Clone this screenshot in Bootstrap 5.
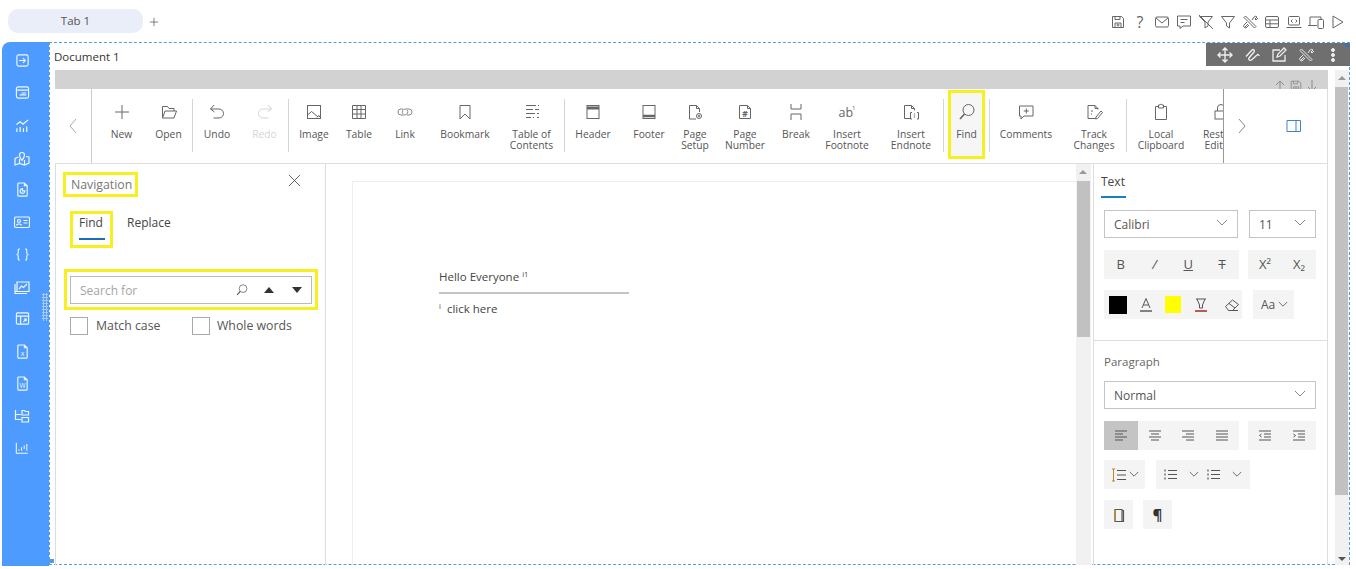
<!DOCTYPE html>
<html lang="en">
<head>
<meta charset="UTF-8">
<title>Document 1</title>
<link rel="stylesheet" href="https://cdn.jsdelivr.net/npm/bootstrap@5.3.0/dist/css/bootstrap.min.css">
<style>
    html, body { height: 569px; overflow: hidden; }
    body { background: #fff; color: #444; font-family: "Open Sans", "Liberation Sans", sans-serif; font-size: 12px; }
    svg { display: block; fill: none; stroke: currentColor; stroke-width: 1; flex: none; }
    svg text { fill: currentColor; stroke: none; font-family: "Open Sans", sans-serif; }

    .tab-strip { height: 42px; padding: 9px 7px 0 8px; }
    .tab-pill { width: 135px; height: 24px; background: #e9eef8; border-radius: 10px; color: #555; line-height: 24px; text-align: center; font-size: 11.5px; }
    .tab-add { width: 20px; color: #333; padding-top: 7px; padding-left: 5px; }
    .top-set { padding-top: 5px; }
    .top-icon { width: 22px; display: flex; justify-content: center; color: #666; }

    .work-row { height: 524px; padding-left: 2px; }
    .side-rail { width: 47px; background: #4d9bff; border-top-left-radius: 8px; padding-top: 11px; color: #f2f7ff; flex: none; }
    .side-rail svg { stroke-width: 1.2; }
    .rail-item { height: 32.3px; display: flex; justify-content: center; align-items: flex-start; padding-right: 7px; }
    .frame-box { width: 1301px; height: 523px; border: 1px dashed #5a9be0; padding-left: 5px; position: relative; }
    .frame-head { height: 27px; line-height: 28px; color: #333; font-size: 11.5px; margin-left: -1px; }
    .grip-dots { position: absolute; left: -8px; top: 250px; width: 6px; height: 28px; background-image: radial-gradient(#a9c9f2 1px, transparent 1.1px); background-size: 3px 3px; }
    .corner-a { position: absolute; right: 0; top: 0; width: 4px; height: 4px; background: #3c6fb0; }
    .corner-b { position: absolute; left: -1px; bottom: 1px; width: 5px; height: 4px; background: #5a9be0; }

    .float-tools { position: absolute; right: -1px; top: 0; width: 144px; height: 23px; background: #6f6f6f; color: #eee; padding-left: 5px; }
    .float-tools span { width: 27px; display: flex; justify-content: center; }

    .doc-col { width: 1273px; height: 495px; }
    .grey-strip { height: 19px; background: #d2d2d2; color: #8a8a8a; overflow: hidden; padding: 9px 8px 0 0; gap: 1px; flex: none; }
    .grey-strip span { width: 15px; display: block; }

    .ribbon { height: 75px; border-bottom: 1px solid #ddd; border-right: 1px solid #ddd; position: relative; overflow: hidden; flex: none; }
    .rib-back { width: 37px; border-right: 1px solid #ccc; color: #aaa; flex: none; }
    .rib-list { padding-left: 6px; flex: none; }
    .rib-item { flex: none; padding-top: 13px; text-align: center; font-size: 10.3px; line-height: 11px; color: #555; }
    .rib-item svg { margin: 0 auto 7px; color: #666; }
    .rib-off, .rib-item.rib-off svg { color: #d5d5d5; }
    .rib-sep { width: 1px; height: 53px; margin-top: 10px; background: #d5d5d5; flex: none; }
    .wd-36 { width: 36px; } .wd-38 { width: 38px; } .wd-40 { width: 40px; } .wd-47 { width: 47px; }
    .wd-48 { width: 48px; } .wd-50 { width: 50px; } .wd-52 { width: 52px; } .wd-56 { width: 56px; }
    .wd-64 { width: 64px; } .wd-65 { width: 65px; } .wd-68 { width: 68px; } .wd-72 { width: 72px; }
    .rib-find { width: 37px; height: 69px; margin: 1px 4px 0 4px; border: 3px solid #f7f01e; background: #f6f6f6; padding-top: 9px; }
    .rib-find svg { margin-bottom: 7px; }
    .rib-end { position: absolute; right: 0; top: 0; bottom: 0; width: 104px; background: #fff; border-left: 1px solid #999; color: #888; }
    .rib-end .toggle-ic { color: #3f83c9; margin-left: 38px; }
    .rib-end .next-ic { margin-left: 12px; }

    .lower-row { min-height: 0; overflow: hidden; }
    .nav-pane { width: 271px; border-left: 1px solid #ddd; border-right: 1px solid #ddd; padding: 8px 0 0 7px; flex: none; position: relative; }
    .mark-box { border: 3px solid #f7f01e; }
    .nav-title { width: 75px; height: 25px; line-height: 20px; padding-left: 5px; color: #777; font-size: 12.3px; }
    .nav-close { position: absolute; left: 232px; top: 10px; color: #555; }
    .nav-tabs-row { margin: 14px 0 0 7px; height: 37px; }
    .find-tab { width: 43px; height: 37px; padding: 0 0 0 6px; color: #444; position: relative; }
    .find-tab i { display: block; position: absolute; left: 6px; top: 24px; width: 26px; height: 2px; background: #1a6fbb; }
    .nav-tabs-row .nav-link { padding: 3px 0 0; color: #444; margin-left: 14px; font-size: 12px; }
    .search-wrap { width: 254px; height: 41px; margin: 21px 0 0 1px; padding: 4px 3px; }
    .search-inner { height: 28px; border: 1px solid #bbb; padding-left: 9px; color: #555; }
    .search-inner .form-control { border: 0; padding: 1px 0 0; font-size: 12px; height: 26px; box-shadow: none; width: 148px; background: transparent; font-family: inherit; flex: none; }
    .search-inner .form-control::placeholder { color: #a5a5a5; }
    .search-up { margin: 0 16px 0 14px; }
    .opt-row { margin: 7px 0 0 7px; font-size: 12.3px; color: #555; }
    .opt-row label { line-height: 20px; height: 18px; }
    .opt-row .form-check-input { width: 18px; height: 18px; margin: 0; border-radius: 0; border-color: #aaa; flex: none; }
    .opt-one { width: 122px; gap: 8px; }
    .opt-two { gap: 7px; }

    .page-area { width: 750px; padding: 17px 0 0 26px; overflow: hidden; flex: none; }
    .page-sheet { height: 500px; border: 1px solid #eee; border-right: 0; padding: 86px 0 0 86px; font-size: 11.5px; line-height: 18px; color: #444; }
    .page-sheet sup { font-size: 7.5px; top: -4px; position: relative; vertical-align: baseline; }
    .page-rule { width: 190px; height: 2px; background: #c4c4c4; margin: 6px 0 6px; }
    .scroll-y { background: #f1f1f1; color: #777; position: relative; flex: none; }
    .scroll-in { width: 15px; margin-right: 2px; }
    .scroll-out { width: 14px; height: 495px; margin-left: 7px; }
    .scroll-thumb { position: absolute; left: 1px; right: 1px; background: #c1c1c1; }
    .scroll-in .scroll-thumb { top: 17px; height: 156px; }
    .scroll-out .scroll-thumb { top: 17px; height: 408px; left: 0; }
    .arrow-up, .arrow-dn { position: absolute; left: 3px; width: 0; height: 0; border-left: 4px solid transparent; border-right: 4px solid transparent; }
    .arrow-up { top: 6px; border-bottom: 4px solid #999; }
    .arrow-dn { bottom: 4px; border-top: 4px solid #555; }

    .prop-pane { width: 235px; border-left: 1px solid #ddd; border-right: 1px solid #ddd; flex: none; }
    .prop-text { height: 177px; border-bottom: 1px solid #ddd; padding: 11px 11px 0 10px; }
    .prop-para { padding: 14px 11px 0 10px; }
    .prop-tab { width: 25px; height: 23px; border-bottom: 2px solid #1a7fc1; margin-left: -3px; color: #444; font-size: 12px; line-height: 14px; }
    .pick-box { height: 28px; border: 1px solid #c4c4c4; padding: 2px 9px 0; color: #555; font-size: 12px; }
    .pick-box svg { color: #888; margin-top: -5px; }
    .pick-font { width: 134px; }
    .pick-size { width: 67px; }
    .gap-12 { margin-top: 12px; }
    .gap-10 { margin-top: 10px; }
    .gap-11 { margin-top: 11px; }
    .btn-band { background: #f4f4f4; height: 29px; color: #555; }
    .prop-btn { height: 29px; padding: 0; border: 0; border-radius: 0; display: flex; align-items: center; justify-content: center; color: #555; font-size: 13px; line-height: 1; flex: none; }
    .b21 { width: 21px; } .b29 { width: 29px; } .b33 { width: 33.5px; } .b34 { width: 34px; } .b38 { width: 38px; } .b40 { width: 40px; }
    .on-btn { background: #c4c4c4; }
    .ink-black { width: 18px; height: 18px; background: #000; display: block; margin-left: 5px; flex: none; }
    .ink-yellow { width: 16px; height: 17px; background: #ff0; display: block; flex: none; }
    .para-label { color: #666; font-size: 11.5px; line-height: 14px; margin: 0 0 12px; font-weight: 400; }
    .band-case { width: 41px; margin-left: 11px; padding-left: 8px; gap: 3px; }
    .band-line { width: 41px; padding-left: 7px; gap: 2px; }
    .band-list { width: 94px; margin-left: 11px; padding-left: 8px; }
    .list-pick { width: 48px; gap: 11px; }
    .band-next { margin-left: 10px; }
    .pilcrow-btn { color: #333; font-size: 15px; }
</style>
</head>
<body>

<!-- icon set -->
<svg width="0" height="0" class="position-absolute">
    <symbol id="i-new" viewBox="0 0 20 20"><path d="M10 3v14M3 10h14"/></symbol>
    <symbol id="i-open" viewBox="0 0 20 20"><path d="M3.500 16V4.500h5l1.500 2h5v2.500M3.500 16h11.500l2.500-7H6z"/></symbol>
    <symbol id="i-undo" viewBox="0 0 20 20"><path d="M7 3 3.500 7 7.500 10M3.500 7H12a4.500 4.500 0 0 1 0 9H6.500"/></symbol>
    <symbol id="i-redo" viewBox="0 0 20 20"><path d="M13 3l3.500 4-4 3M16.500 7H8a4.500 4.500 0 0 0 0 9h5.500"/></symbol>
    <symbol id="i-image" viewBox="0 0 20 20"><rect x="3.500" y="3.500" width="13" height="13" fill="none"/><path d="M3.500 13l4-3.500 6 5 1-1 2 2M13 15.500l2-2"/></symbol>
    <symbol id="i-table" viewBox="0 0 20 20"><path d="M3.500 3.500h13v13h-13zM3.500 7.500h13M3.500 12h13M8 3.500v13M12 3.500v13"/></symbol>
    <symbol id="i-link" viewBox="0 0 20 20"><path d="M8 7H6a3 3 0 0 0 0 6h4a3 3 0 0 0 2-5M12 13h2a3 3 0 0 0 0-6h-4a3 3 0 0 0-2 5" stroke="#888"/></symbol>
    <symbol id="i-mark" viewBox="0 0 20 20"><path d="M5 3.500h10V17l-5-5-5 5z"/></symbol>
    <symbol id="i-toc" viewBox="0 0 20 20"><path d="M4 3.500h10M16 3.500h1M4 7.500h7M13 7.500h4M4 11.500h9M15 11.500h2M4 15.500h5M11 15.500h1M15 15.500h2"/></symbol>
    <symbol id="i-head" viewBox="0 0 20 20"><rect x="4" y="3.500" width="12" height="13" fill="none"/><path d="M4 6h12" stroke-width="3"/></symbol>
    <symbol id="i-foot" viewBox="0 0 20 20"><rect x="4" y="3.500" width="12" height="13" fill="none"/><path d="M4 14h12" stroke-width="2.500"/></symbol>
    <symbol id="i-setup" viewBox="0 0 20 20"><path d="M11 17H4.500V3.500h7l3 3V10M11.500 3.500v3h3"/><circle cx="14" cy="14" r="2.500"/><circle cx="14" cy="14" r=".8"/></symbol>
    <symbol id="i-break" viewBox="0 0 20 20"><path d="M5 2v5h10V2M5 18v-6h10v6"/></symbol>
    <symbol id="i-find" viewBox="0 0 20 20"><circle cx="11.500" cy="8" r="5.500"/><path d="M7.500 12 3 17" stroke-width="1.600"/></symbol>
    <symbol id="i-comm" viewBox="0 0 20 20"><path d="M3.500 4h13.500v10H8l-3 3v-3H3.500zM10.300 6.500v5M7.800 9h5"/></symbol>
    <symbol id="i-track" viewBox="0 0 20 20"><path d="M11 16.500H4V3.500h7l3 3v1M11 3.500v3h3M7 9h2M7 12h1M12 15l5-6 1.500 1.500-5 6-2 .5z"/></symbol>
    <symbol id="i-clip" viewBox="0 0 20 20"><path d="M7 4.500H4.500v13h11v-13H13M7.500 6V3H9c0-1 2-1 2 0h1.500v3z"/></symbol>
    <symbol id="i-lock" viewBox="0 0 20 20"><rect x="4" y="9" width="12" height="8" fill="none"/><path d="M6.500 9V6a3.500 3.500 0 0 1 7 0v3"/></symbol>
    <symbol id="i-left" viewBox="0 0 12 20"><path d="M9 3 3 10l6 7"/></symbol>
    <symbol id="i-right" viewBox="0 0 12 20"><path d="m3 3 6 7-6 7"/></symbol>
    <symbol id="i-panel" viewBox="0 0 16 14"><path d="M1 1.500h13.500v11H1zM10 1.500v11"/></symbol>
    <symbol id="i-close" viewBox="0 0 14 14"><path d="m1 1 12 12M13 1 1 13"/></symbol>
    <symbol id="i-chev" viewBox="0 0 12 8"><path d="m1 1 5 5 5-5"/></symbol>
    <symbol id="i-upto" viewBox="0 0 14 14"><path d="M7 2v11M3 6l4-4 4 4M1 13h12"/></symbol>
    <symbol id="i-dnto" viewBox="0 0 14 14"><path d="M7 1v11M3 8l4 4 4-4M1 13h12"/></symbol>

    <symbol id="t-save" viewBox="0 0 16 16"><path d="M2.500 2.500h9l2 2v9h-11zM5 2.500v3h5v-3M5 13.500V9h6v4.500"/><circle cx="8" cy="11" r="1"/></symbol>
    <symbol id="t-mail" viewBox="0 0 16 16"><rect x="1.500" y="3" width="13" height="10" rx="1.500" fill="none"/><path d="m2 4 6 5 6-5"/></symbol>
    <symbol id="t-chat" viewBox="0 0 16 16"><path d="M1.500 2h13v10H7l-3 2.500V12H1.500zM4.500 5.500h7M4.500 8.500h4"/></symbol>
    <symbol id="t-nofilter" viewBox="0 0 16 16"><path d="M1.500 2.500h13L10 8v4l-3 2V8zM1 1l14 14"/></symbol>
    <symbol id="t-filter" viewBox="0 0 16 16"><path d="M1.500 2.500h13L9.500 9v5l-3-2V9z"/></symbol>
    <symbol id="t-tools" viewBox="0 0 16 16"><path d="m2 3.500 1.500-1.500 10.500 10.500L12.500 14zM10 6l2-3c1-1 2.500-1 3 0l-2 2 1 1 2-2M6 10l-3 3M5 8 2 11c-1 1 0 3 2 3l3-3"/></symbol>
    <symbol id="t-grid" viewBox="0 0 16 16"><rect x="1.500" y="2.500" width="13" height="11" rx="1.500" fill="none"/><path d="M1.500 6h13M1.500 9.800h13M6 6v7.500"/></symbol>
    <symbol id="t-laptop" viewBox="0 0 16 16"><rect x="2.500" y="2.500" width="11" height="8.500" rx="1" fill="none"/><path d="M.5 13.500h15M6.500 5.500 5 7l1.500 1.500M9.500 5.500 11 7 9.500 8.500"/></symbol>
    <symbol id="t-device" viewBox="0 0 16 16"><path d="M9 11.500H0M2 11V3h11v2"/><rect x="10" y="5.500" width="5.500" height="9" rx="1" fill="none"/></symbol>
    <symbol id="t-play" viewBox="0 0 16 16"><path d="M3 2v12l10-6z"/></symbol>

    <symbol id="f-move" viewBox="0 0 16 16"><path d="M8 1v14M1 8h14M5.500 3.500 8 1l2.500 2.500M5.500 12.500 8 15l2.500-2.500M3.500 5.500 1 8l2.500 2.500M12.500 5.500 15 8l-2.500 2.500" stroke-width="1.400"/></symbol>
    <symbol id="f-wave" viewBox="0 0 16 16"><path d="M2 9.500 8 3c1.500-1.500 3 .5 2 2L5 11c-1 1.500 1 3 2.500 2L13 8c1-1 2 0 2 1" stroke-width="1.400"/></symbol>
    <symbol id="f-edit" viewBox="0 0 16 16"><path d="M14 8v6H2V3h7M6 10l1-3 6-6 2 2-6 6z" stroke-width="1.300"/></symbol>
    <symbol id="f-dots" viewBox="0 0 16 16"><circle cx="8" cy="3" r="1.500" fill="currentColor"/><circle cx="8" cy="8" r="1.500" fill="currentColor"/><circle cx="8" cy="13" r="1.500" fill="currentColor"/></symbol>

    <symbol id="r-login" viewBox="0 0 16 16"><rect x="2" y="2" width="12" height="12" rx="2" fill="none"/><path d="M4.500 8H11M8.500 5.500 11 8l-2.500 2.500"/></symbol>
    <symbol id="r-card" viewBox="0 0 16 16"><rect x="1.500" y="2" width="13" height="12" rx="2" fill="none"/><path d="M1.500 5.500h13M7 8.500h5M5 10.500h7"/></symbol>
    <symbol id="r-bars" viewBox="0 0 16 16"><path d="M2 15v-4M5.500 15V9.500M9 15v-4M12.500 15V9M1.500 7l4-3 3 2.500L14 2" stroke-width="1.300"/></symbol>
    <symbol id="r-map" viewBox="0 0 16 16"><path d="M4.500 7 1 8.500V15l4.500-1.500 5 1.500L15 13V7l-3-.5M5.500 9v4.500M10.500 10v5"/><path d="M8 10.500C6.500 8.500 5.500 7 5.500 5a2.500 2.500 0 0 1 5 0c0 2-1 3.500-2.500 5.500z"/></symbol>
    <symbol id="r-doc" viewBox="0 0 16 16"><path d="M3 2a1 1 0 0 1 1-1h6l3 3v10a1 1 0 0 1-1 1H4a1 1 0 0 1-1-1zM10 1v3h3"/><path d="M10.500 9.500a2.500 2.500 0 1 1-2.500-2.500V9.500z"/></symbol>
    <symbol id="r-id" viewBox="0 0 16 16"><rect x=".5" y="3" width="15" height="10.500" rx="1.500" fill="none"/><circle cx="5" cy="7" r="1.500"/><path d="M2.500 11.500c0-2 5-2 5 0M9.500 6.500h4M9.500 9h4"/></symbol>
    <symbol id="r-brace" viewBox="0 0 16 16"><path d="M5 2C3 2 3.500 4 3.500 6S2.500 8 1.500 8c1 0 2 0 2 2S3 14 5 14M11 2c2 0 1.500 2 1.500 4s1 2 2 2c-1 0-2 0-2 2s.5 4-1.500 4"/></symbol>
    <symbol id="r-chart" viewBox="0 0 16 16"><path d="M3 12.500V3h12v9.500H1"/><path d="M1 5v9.500h12M5 10l2.500-3 2 1.500L13 5"/></symbol>
    <symbol id="r-sheet" viewBox="0 0 16 16"><rect x="1.500" y="2" width="13" height="12" rx="1" fill="none"/><path d="M1.500 5.500h13M6 5.500V14M9 11.500l3-3M12 11v-2.500H9.500"/></symbol>
    <symbol id="r-page" viewBox="0 0 16 16"><path d="M3 2a1 1 0 0 1 1-1h6l3 3v10a1 1 0 0 1-1 1H4a1 1 0 0 1-1-1zM10 1v3h3"/></symbol>
    <symbol id="r-tree" viewBox="0 0 16 16"><path d="M1.500 2v9.500H7M1.500 6.500H7M8 2.500h2.500l1 1h3V7H8zM8 9.500h6.500V14H8z"/></symbol>
    <symbol id="r-stat" viewBox="0 0 16 16"><path d="M1.500 2v12h13M4.500 11V9.500M7.500 11V7M10.500 9V5M13.500 11V3.500"/></symbol>

    <symbol id="p-a" viewBox="0 0 14 16"><path d="M3 11 7 1.500 11 11M4.500 8h5"/><path d="M1 14h12" stroke-width="1.600" stroke="#666"/></symbol>
    <symbol id="p-hi" viewBox="0 0 14 16"><path d="M2 2h10M3 2l2.500 6v3h3V8L11 2"/><path d="M1 14h12" stroke-width="1.600" stroke="#a33"/></symbol>
    <symbol id="p-erase" viewBox="0 0 16 14"><path d="m1.500 8.500 7-6.500 6 4.500-6 6H4.500zM5 5.500l6 4.500M4.500 12.500H14"/></symbol>
    <symbol id="p-al" viewBox="0 0 14 12"><path d="M1 1h12M1 4h8M1 7h12M1 10h8" stroke="#555"/></symbol>
    <symbol id="p-ac" viewBox="0 0 14 12"><path d="M1 1h12M3 4h8M1 7h12M3 10h8"/></symbol>
    <symbol id="p-ar" viewBox="0 0 14 12"><path d="M1 1h12M5 4h8M1 7h12M5 10h8"/></symbol>
    <symbol id="p-aj" viewBox="0 0 14 12"><path d="M1 1h12M1 4h12M1 7h12M1 10h12"/></symbol>
    <symbol id="p-out" viewBox="0 0 14 12"><path d="M1 1h12M6 4h7M6 7h7M1 10h12M3.500 4 1.500 5.500l2 1.500"/></symbol>
    <symbol id="p-in" viewBox="0 0 14 12"><path d="M1 1h12M6 4h7M6 7h7M1 10h12M1.500 4l2 1.500-2 1.500"/></symbol>
    <symbol id="p-line" viewBox="0 0 16 14"><path d="M2.500 1v12M1 1h3M1 13h3" stroke="#b8862b"/><path d="M6 2.500h9M6 7h9M6 11.500h9"/></symbol>
    <symbol id="p-list" viewBox="0 0 14 12"><path d="M4 1.500h9M4 5.500h9M4 9.500h9M1 .5v2M1 4.500v2M1 8.500v2" stroke-width="1.200"/></symbol>
    <symbol id="p-pdoc" viewBox="0 0 14 16"><path d="M3 2.500h7v12H3zM10 3.500h1.500v11H10" stroke-width="1.200"/><path d="M3 2.500v12" stroke="#b8862b" stroke-width="1.200"/></symbol>
</svg>

<!-- tab bar -->
<div class="tab-strip d-flex">
    <div class="tab-pill">Tab 1</div>
    <div class="tab-add"><svg width="12" height="12"><use href="#i-new"/></svg></div>
    <div class="d-flex ms-auto top-set">
        <span class="top-icon"><svg width="16" height="16"><use href="#t-save"/></svg></span>
        <span class="top-icon fs-6 lh-1">?</span>
        <span class="top-icon"><svg width="16" height="16"><use href="#t-mail"/></svg></span>
        <span class="top-icon"><svg width="16" height="16"><use href="#t-chat"/></svg></span>
        <span class="top-icon"><svg width="16" height="16"><use href="#t-nofilter"/></svg></span>
        <span class="top-icon"><svg width="16" height="16"><use href="#t-filter"/></svg></span>
        <span class="top-icon"><svg width="16" height="16"><use href="#t-tools"/></svg></span>
        <span class="top-icon"><svg width="16" height="16"><use href="#t-grid"/></svg></span>
        <span class="top-icon"><svg width="16" height="16"><use href="#t-laptop"/></svg></span>
        <span class="top-icon"><svg width="16" height="16"><use href="#t-device"/></svg></span>
        <span class="top-icon"><svg width="16" height="16"><use href="#t-play"/></svg></span>
    </div>
</div>

<div class="work-row d-flex">
    <!-- left rail -->
    <div class="side-rail">
        <div class="rail-item"><svg width="15" height="15"><use href="#r-login"/></svg></div>
        <div class="rail-item"><svg width="15" height="15"><use href="#r-card"/></svg></div>
        <div class="rail-item"><svg width="15" height="15"><use href="#r-bars"/></svg></div>
        <div class="rail-item"><svg width="16" height="16"><use href="#r-map"/></svg></div>
        <div class="rail-item"><svg width="15" height="15"><use href="#r-doc"/></svg></div>
        <div class="rail-item"><svg width="16" height="16"><use href="#r-id"/></svg></div>
        <div class="rail-item"><svg width="15" height="15"><use href="#r-brace"/></svg></div>
        <div class="rail-item"><svg width="16" height="16"><use href="#r-chart"/></svg></div>
        <div class="rail-item"><svg width="15" height="15"><use href="#r-sheet"/></svg></div>
        <div class="rail-item"><svg width="15" height="15" viewBox="0 0 16 16"><use href="#r-page"/><text x="8" y="12.500" font-size="7.500" text-anchor="middle">x</text></svg></div>
        <div class="rail-item"><svg width="15" height="15" viewBox="0 0 16 16"><use href="#r-page"/><text x="8" y="12.500" font-size="7" text-anchor="middle">W</text></svg></div>
        <div class="rail-item"><svg width="16" height="16"><use href="#r-tree"/></svg></div>
        <div class="rail-item"><svg width="14" height="14"><use href="#r-stat"/></svg></div>
    </div>

    <div class="frame-box">
        <div class="grip-dots"></div>
        <div class="frame-head">Document 1</div>
        <div class="float-tools d-flex align-items-center">
            <span><svg width="16" height="16"><use href="#f-move"/></svg></span>
            <span><svg width="16" height="16"><use href="#f-wave"/></svg></span>
            <span><svg width="16" height="16"><use href="#f-edit"/></svg></span>
            <span><svg width="16" height="16"><use href="#t-tools"/></svg></span>
            <span><svg width="16" height="16"><use href="#f-dots"/></svg></span>
        </div>
        <div class="corner-a"></div>
        <div class="corner-b"></div>

        <div class="d-flex">
            <div class="doc-col d-flex flex-column">
                <div class="grey-strip d-flex justify-content-end">
                    <span><svg width="14" height="14"><use href="#i-upto"/></svg></span>
                    <span><svg width="14" height="14"><use href="#t-save"/></svg></span>
                    <span><svg width="14" height="14"><use href="#i-dnto"/></svg></span>
                </div>

                <!-- ribbon -->
                <div class="ribbon d-flex">
                    <div class="rib-back d-flex align-items-center justify-content-center"><svg width="12" height="20"><use href="#i-left"/></svg></div>
                    <div class="rib-list d-flex">
                        <div class="rib-item wd-47"><svg width="20" height="20"><use href="#i-new"/></svg>New</div>
                        <div class="rib-item wd-47"><svg width="20" height="20"><use href="#i-open"/></svg>Open</div>
                        <div class="rib-sep"></div>
                        <div class="rib-item wd-48"><svg width="20" height="20"><use href="#i-undo"/></svg>Undo</div>
                        <div class="rib-item wd-47 rib-off"><svg width="20" height="20"><use href="#i-redo"/></svg>Redo</div>
                        <div class="rib-sep"></div>
                        <div class="rib-item wd-50"><svg width="20" height="20"><use href="#i-image"/></svg>Image</div>
                        <div class="rib-item wd-40"><svg width="20" height="20"><use href="#i-table"/></svg>Table</div>
                        <div class="rib-item wd-52"><svg width="20" height="20"><use href="#i-link"/></svg>Link</div>
                        <div class="rib-item wd-68"><svg width="20" height="20"><use href="#i-mark"/></svg>Bookmark</div>
                        <div class="rib-item wd-65"><svg width="20" height="20"><use href="#i-toc"/></svg>Table of<br>Contents</div>
                        <div class="rib-sep"></div>
                        <div class="rib-item wd-56"><svg width="20" height="20"><use href="#i-head"/></svg>Header</div>
                        <div class="rib-item wd-56"><svg width="20" height="20"><use href="#i-foot"/></svg>Footer</div>
                        <div class="rib-item wd-36"><svg width="20" height="20"><use href="#i-setup"/></svg>Page<br>Setup</div>
                        <div class="rib-item wd-64">
                            <svg width="20" height="20" viewBox="0 0 20 20"><path d="M4.500 3.500h8l3 3v10h-11zM12.500 3.500v3h3"/><text x="10" y="14.500" font-size="8.500" text-anchor="middle" font-weight="700">#</text></svg>Page<br>Number</div>
                        <div class="rib-item wd-38"><svg width="20" height="20"><use href="#i-break"/></svg>Break</div>
                        <div class="rib-item wd-64">
                            <svg width="20" height="20" viewBox="0 0 20 20"><text x="1.500" y="15" font-size="12.500">ab</text><text x="15" y="8" font-size="6">1</text></svg>Insert<br>Footnote</div>
                        <div class="rib-item wd-64">
                            <svg width="20" height="20" viewBox="0 0 20 20"><path d="M9 16.500H3.500V3.500h7l3 3v2M10.500 3.500v3h3M11 10.500h-1.500v6.500H11M16 10.500h1.500v6.500H16"/><text x="13.500" y="16" font-size="7" text-anchor="middle">i</text></svg>Insert<br>Endnote</div>
                        <div class="rib-sep"></div>
                        <div class="rib-item rib-find"><svg width="20" height="20"><use href="#i-find"/></svg>Find</div>
                        <div class="rib-sep"></div>
                        <div class="rib-item wd-72"><svg width="20" height="20"><use href="#i-comm"/></svg>Comments</div>
                        <div class="rib-item wd-64"><svg width="20" height="20"><use href="#i-track"/></svg>Track<br>Changes</div>
                        <div class="rib-sep"></div>
                        <div class="rib-item wd-68"><svg width="20" height="20"><use href="#i-clip"/></svg>Local<br>Clipboard</div>
                        <div class="rib-item wd-52"><svg width="20" height="20"><use href="#i-lock"/></svg>Restrict<br>Editing</div>
                    </div>
                    <div class="rib-end d-flex align-items-center">
                        <svg class="next-ic" width="12" height="20"><use href="#i-right"/></svg>
                        <svg class="toggle-ic" width="16" height="14"><use href="#i-panel"/></svg>
                    </div>
                </div>

                <div class="lower-row d-flex flex-grow-1">
                    <!-- navigation pane -->
                    <div class="nav-pane">
                        <div class="nav-title mark-box">Navigation</div>
                        <svg class="nav-close" width="13" height="13"><use href="#i-close"/></svg>
                        <div class="nav nav-tabs-row">
                            <div class="find-tab mark-box">Find<i></i></div>
                            <a class="nav-link" href="#">Replace</a>
                        </div>
                        <div class="search-wrap mark-box">
                            <div class="search-inner d-flex align-items-center">
                                <input class="form-control" type="text" placeholder="Search for">
                                <svg width="14" height="14" class="ms-auto"><use href="#i-find"/></svg>
                                <svg width="12" height="8" class="search-up"><path d="M1 7 6 1l5 6z" fill="#333" stroke="none"/></svg>
                                <svg width="12" height="8" class="me-2"><path d="M1 1l5 6 5-6z" fill="#333" stroke="none"/></svg>
                            </div>
                        </div>
                        <div class="opt-row d-flex align-items-center">
                            <label class="opt-one d-flex align-items-center"><input class="form-check-input" type="checkbox">Match case</label>
                            <label class="opt-two d-flex align-items-center"><input class="form-check-input" type="checkbox">Whole words</label>
                        </div>
                    </div>

                    <!-- document -->
                    <div class="page-area">
                        <div class="page-sheet">
                            <div>Hello Everyone <sup>i1</sup></div>
                            <div class="page-rule"></div>
                            <div><sup>i</sup>&nbsp; click here</div>
                        </div>
                    </div>
                    <div class="scroll-y scroll-in">
                        <span class="arrow-up"></span>
                        <div class="scroll-thumb"></div>
                    </div>

                    <!-- properties -->
                    <div class="prop-pane">
                        <div class="prop-text">
                            <div class="prop-tab">Text</div>
                            <div class="d-flex gap-12 justify-content-between">
                                <div class="pick-box pick-font d-flex align-items-center justify-content-between">Calibri<svg width="12" height="8"><use href="#i-chev"/></svg></div>
                                <div class="pick-box pick-size d-flex align-items-center justify-content-between">11<svg width="12" height="8"><use href="#i-chev"/></svg></div>
                            </div>
                            <div class="d-flex justify-content-between gap-12">
                                <div class="btn-band d-flex">
                                    <button class="btn prop-btn b33 fw-medium">B</button>
                                    <button class="btn prop-btn b34 fst-italic">/</button>
                                    <button class="btn prop-btn b33 text-decoration-underline">U</button>
                                    <button class="btn prop-btn b34 text-decoration-line-through">T</button>
                                </div>
                                <div class="btn-band d-flex">
                                    <button class="btn prop-btn b34">X²</button>
                                    <button class="btn prop-btn b34">X₂</button>
                                </div>
                            </div>
                            <div class="d-flex gap-11">
                                <div class="btn-band d-flex align-items-center">
                                    <span class="ink-black"></span>
                                    <button class="btn prop-btn b38"><svg width="14" height="16"><use href="#p-a"/></svg></button>
                                    <span class="ink-yellow"></span>
                                    <button class="btn prop-btn b40"><svg width="14" height="16"><use href="#p-hi"/></svg></button>
                                    <button class="btn prop-btn b21"><svg width="16" height="14"><use href="#p-erase"/></svg></button>
                                </div>
                                <div class="btn-band band-case d-flex align-items-center">
                                    <span>Aa</span><svg width="10" height="7"><use href="#i-chev"/></svg>
                                </div>
                            </div>
                        </div>
                        <div class="prop-para">
                            <h6 class="para-label">Paragraph</h6>
                            <div class="pick-box d-flex align-items-center justify-content-between">Normal<svg width="12" height="8"><use href="#i-chev"/></svg></div>
                            <div class="d-flex justify-content-between gap-12">
                                <div class="btn-band d-flex">
                                    <button class="btn prop-btn b33 on-btn"><svg width="14" height="12"><use href="#p-al"/></svg></button>
                                    <button class="btn prop-btn b34"><svg width="14" height="12"><use href="#p-ac"/></svg></button>
                                    <button class="btn prop-btn b33"><svg width="14" height="12"><use href="#p-ar"/></svg></button>
                                    <button class="btn prop-btn b34"><svg width="14" height="12"><use href="#p-aj"/></svg></button>
                                </div>
                                <div class="btn-band d-flex">
                                    <button class="btn prop-btn b34"><svg width="14" height="12"><use href="#p-out"/></svg></button>
                                    <button class="btn prop-btn b34"><svg width="14" height="12"><use href="#p-in"/></svg></button>
                                </div>
                            </div>
                            <div class="d-flex gap-10">
                                <div class="btn-band band-line d-flex align-items-center">
                                    <svg width="16" height="14"><use href="#p-line"/></svg><svg width="10" height="7"><use href="#i-chev"/></svg>
                                </div>
                                <div class="btn-band band-list d-flex align-items-center">
                                    <span class="list-pick d-flex align-items-center"><svg width="14" height="12"><use href="#p-list"/></svg><svg width="10" height="7"><use href="#i-chev"/></svg></span>
                                    <span class="list-pick d-flex align-items-center"><svg width="14" height="12"><use href="#p-list"/></svg><svg width="10" height="7"><use href="#i-chev"/></svg></span>
                                </div>
                            </div>
                            <div class="d-flex gap-11">
                                <div class="btn-band"><button class="btn prop-btn b29"><svg width="14" height="16"><use href="#p-pdoc"/></svg></button></div>
                                <div class="btn-band band-next"><button class="btn prop-btn b29 fw-bold pilcrow-btn">¶</button></div>
                            </div>
                        </div>
                    </div>
                </div>
            </div>
            <div class="scroll-y scroll-out">
                <span class="arrow-up"></span>
                <div class="scroll-thumb"></div>
                <span class="arrow-dn"></span>
            </div>
        </div>
    </div>
</div>
</body>
</html>
